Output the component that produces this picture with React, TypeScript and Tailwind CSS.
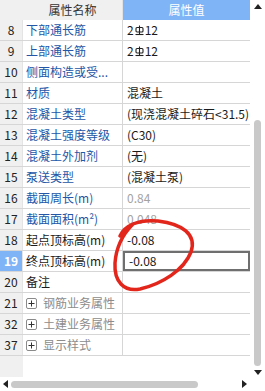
import React from 'react'

type Row = {
  no: string
  name: string
  value?: string
  kind?: 'link' | 'plain' | 'group'
  muted?: boolean
  rebar?: boolean
  selected?: boolean
}

const ROWS: Row[] = [
  { no: '8', name: '下部通长筋', value: '12', kind: 'link', rebar: true },
  { no: '9', name: '上部通长筋', value: '12', kind: 'link', rebar: true },
  { no: '10', name: '侧面构造或受...', value: '', kind: 'link' },
  { no: '11', name: '材质', value: '混凝土', kind: 'link' },
  { no: '12', name: '混凝土类型', value: '(现浇混凝土碎石<31.5)', kind: 'link' },
  { no: '13', name: '混凝土强度等级', value: '(C30)', kind: 'link' },
  { no: '14', name: '混凝土外加剂', value: '(无)', kind: 'link' },
  { no: '15', name: '泵送类型', value: '(混凝土泵)', kind: 'link' },
  { no: '16', name: '截面周长(m)', value: '0.84', kind: 'link', muted: true },
  { no: '17', name: '截面面积(m²)', value: '0.048', kind: 'link', muted: true },
  { no: '18', name: '起点顶标高(m)', value: '-0.08', kind: 'plain' },
  { no: '19', name: '终点顶标高(m)', value: '-0.08', kind: 'plain', selected: true },
  { no: '20', name: '备注', value: '', kind: 'plain' },
  { no: '21', name: '钢筋业务属性', kind: 'group' },
  { no: '32', name: '土建业务属性', kind: 'group' },
  { no: '37', name: '显示样式', kind: 'group' },
]

function RebarMark() {
  return (
    <svg width="9" height="11" viewBox="0 0 9 11" className="mx-[1px] inline-block">
      <rect x="1" y="2.5" width="7" height="4.5" rx="1" fill="none" stroke="#222" strokeWidth="1.1" />
      <line x1="4.5" y1="0.5" x2="4.5" y2="9" stroke="#222" strokeWidth="1.1" />
      <line x1="0.5" y1="9.5" x2="8.5" y2="9.5" stroke="#222" strokeWidth="1.1" />
    </svg>
  )
}

function PlusBox() {
  return (
    <span className="mr-[6px] flex h-[11px] w-[11px] shrink-0 items-center justify-center rounded-[2px] border border-[#8a8a8a] bg-white">
      <svg width="7" height="7" viewBox="0 0 7 7">
        <line x1="0.5" y1="3.5" x2="6.5" y2="3.5" stroke="#333" strokeWidth="1" />
        <line x1="3.5" y1="0.5" x2="3.5" y2="6.5" stroke="#333" strokeWidth="1" />
      </svg>
    </span>
  )
}

function Tri({ dir }: { dir: 'up' | 'down' | 'left' | 'right' }) {
  const pts = {
    up: '0,6 4,1 8,6',
    down: '0,1 8,1 4,6',
    left: '6,0 6,8 1,4',
    right: '1,0 1,8 6,4',
  }[dir]
  const size = dir === 'up' || dir === 'down' ? { w: 8, h: 7 } : { w: 7, h: 8 }
  return (
    <svg width={size.w} height={size.h} viewBox={`0 0 ${size.w} ${size.h}`}>
      <polygon points={pts} fill="#222" />
    </svg>
  )
}

export default function App() {
  return (
    <div
      className="relative h-[391px] w-[265px] overflow-hidden bg-white text-[12px] text-[#1a1a1a]"
      style={{ fontFamily: '"Microsoft YaHei", "Noto Sans CJK SC", "Noto Sans", sans-serif' }}
    >
      <div className="flex h-[377px]">
        {/* grid */}
        <div className="flex w-[250px] flex-col">
          <div className="flex h-[20px] shrink-0">
            <div className="w-[23px] bg-[#f0f0f0]" />
            <div className="flex w-[100px] items-center justify-center border-r border-[#e2e2e2] bg-[#f0f0f0] text-[#333]">
              属性名称
            </div>
            <div className="flex w-[127px] items-center justify-center bg-[#7fb4f6] text-white">属性值</div>
          </div>

          {ROWS.map(r => (
            <div key={r.no} className="flex h-[21px] shrink-0 border-b border-[#d6d6d6]">
              <div
                className={`flex w-[23px] shrink-0 items-center justify-center border-r border-[#e4e4e4] ${
                  r.selected ? 'bg-[#7fb4f6] font-bold text-white' : 'bg-[#f0f0f0] text-[#222]'
                }`}
              >
                {r.no}
              </div>
              <div
                className={`flex w-[100px] shrink-0 items-center overflow-hidden border-r border-[#d6d6d6] pl-[3px] ${
                  r.kind === 'link' ? 'text-[#2356a6]' : r.kind === 'group' ? 'text-[#8c8c8c]' : 'text-[#1a1a1a]'
                }`}
              >
                {r.kind === 'group' && <PlusBox />}
                <span className="whitespace-nowrap">{r.name}</span>
              </div>
              <div
                className={`flex w-[127px] shrink-0 items-center overflow-hidden whitespace-nowrap pl-[4px] ${
                  r.muted ? 'text-[#a3a3a3]' : 'text-[#1a1a1a]'
                } ${r.selected ? 'border-2 border-[#6f6f6f] pl-[2px]' : ''}`}
              >
                {r.rebar ? (
                  <>
                    2<RebarMark />
                    {r.value}
                  </>
                ) : (
                  r.value
                )}
              </div>
            </div>
          ))}

          <div className="flex flex-1">
            <div className="w-[23px] bg-[#f0f0f0]" />
          </div>
        </div>

        {/* vertical scrollbar */}
        <div className="flex w-[15px] flex-col items-center bg-white pt-[3px]">
          <Tri dir="up" />
          <div className="mt-[110px] h-[246px] w-[7px] rounded-full bg-[#c9c9c9]" />
          <div className="mt-[3px]">
            <Tri dir="down" />
          </div>
        </div>
      </div>

      {/* horizontal scrollbar */}
      <div className="flex h-[14px] items-center px-[2px]">
        <Tri dir="left" />
        <div className="ml-[2px] h-[7px] w-[187px] rounded-full bg-[#c9c9c9]" />
        <div className="ml-auto mr-[15px]">
          <Tri dir="right" />
        </div>
      </div>

      {/* hand drawn annotation */}
      <svg className="pointer-events-none absolute left-0 top-0" width="265" height="391" viewBox="0 0 265 391">
        <path
          d="M120 236 C 124 226, 138 219, 158 221 C 182 224, 197 234, 191 252 C 184 270, 162 284, 140 289 C 124 292, 114 282, 115 263 C 116 249, 121 236, 133 224"
          fill="none"
          stroke="#e3261c"
          strokeWidth="3.5"
          strokeLinecap="round"
        />
      </svg>
    </div>
  )
}
